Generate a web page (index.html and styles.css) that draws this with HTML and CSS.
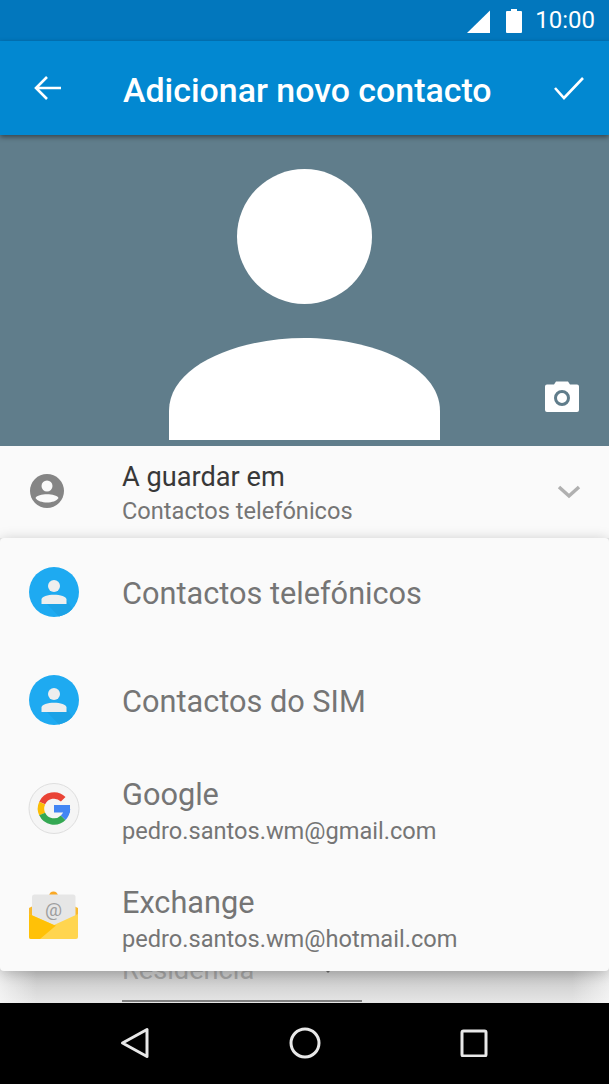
FILE: index.html
```html
<!DOCTYPE html>
<html lang="pt">
<head>
    <meta charset="UTF-8">
    <meta name="viewport" content="width=device-width, initial-scale=1.0">
    <title>Adicionar novo contacto</title>
    <link rel="stylesheet" href="styles.css">
</head>
<body>
    <div class="phone">
        <div class="status-bar">
            <svg class="signal" width="25" height="25" viewBox="0 0 25 25"><path d="M1 24 L24 1.500 V24 Z" fill="#fff"/></svg>
            <svg class="battery" width="16" height="25" viewBox="0 0 16 25"><path d="M5 1 H11 V3 H15 Q16 3 16 4 V24 Q16 25 15 25 H1 Q0 25 0 24 V4 Q0 3 1 3 H5 Z" fill="#fff"/></svg>
            <span class="clock">10:00</span>
        </div>

        <div class="app-bar">
            <svg class="icon-back" width="30" height="30" viewBox="0 0 30 30"><path d="M29 15 H4 M15 4 L4 15 L15 26" fill="none" stroke="#fff" stroke-width="2.600"/></svg>
            <h1>Adicionar novo contacto</h1>
            <svg class="icon-done" width="32" height="26" viewBox="0 0 32 26"><path d="M2 13 L11 23 L30 3" fill="none" stroke="#fff" stroke-width="2.600"/></svg>
        </div>

        <div class="photo">
            <svg class="avatar" width="271" height="272" viewBox="0 0 271 272">
                <circle cx="135.500" cy="68.500" r="67.500" fill="#fff"/>
                <path d="M0 272 V243 C0 197 70 170 135.500 170 C201 170 271 197 271 243 V272 Z" fill="#fff"/>
            </svg>
            <svg class="camera" width="36" height="32" viewBox="0 0 36 32">
                <path d="M3 3.500 H10 L12 .5 H24 L26 3.500 H33 Q35 3.500 35 5.500 V29 Q35 31 33 31 H3 Q1 31 1 29 V5.500 Q1 3.500 3 3.500 Z" fill="#fff"/>
                <circle cx="18" cy="17" r="6.500" fill="none" stroke="#607d8b" stroke-width="3"/>
            </svg>
        </div>

        <div class="save-row">
            <svg class="save-icon" width="36" height="36" viewBox="0 0 36 36">
                <circle cx="18" cy="18" r="17" fill="#858585"/>
                <circle cx="18" cy="13" r="5.500" fill="#fafafa"/>
                <path d="M6.500 25 C9 20 27 20 29.500 25 C26 31 10 31 6.500 25 Z" fill="#fafafa"/>
            </svg>
            <div class="save-text">
                <div class="save-title">A guardar em</div>
                <div class="save-sub">Contactos telefónicos</div>
            </div>
            <svg class="chevron" width="24" height="14" viewBox="0 0 24 14"><path d="M2 2 L12 11 L22 2" fill="none" stroke="#b0b0b0" stroke-width="3.500"/></svg>
        </div>

        <div class="form-rest">
            <div class="type-field">
                <span class="type-label">Residência</span>
                <span class="type-arrow"></span>
            </div>
        </div>

        <div class="nav-bar">
            <svg width="30" height="32" viewBox="0 0 30 32"><path d="M27 2.500 V29.500 L2.500 16 Z" fill="none" stroke="#e8e8e8" stroke-width="3" stroke-linejoin="round"/></svg>
            <svg width="32" height="32" viewBox="0 0 32 32"><circle cx="16" cy="16" r="14" fill="none" stroke="#e8e8e8" stroke-width="3"/></svg>
            <svg width="28" height="28" viewBox="0 0 28 28"><rect x="2" y="2" width="24" height="25" rx="1.500" fill="none" stroke="#e8e8e8" stroke-width="3"/></svg>
        </div>

        <!-- account picker, lies over the form -->
        <div class="picker">
            <div class="picker-item">
                <svg class="picker-icon" width="52" height="52" viewBox="0 0 52 52">
                    <circle cx="26" cy="26" r="25" fill="#1eaaf1"/>
                    <path d="M38.500 34 L44.500 42.800 A25 25 0 0 1 31 50.500 L19 38 H38.500 Z" fill="#1ca2e6"/>
                    <circle cx="26" cy="20" r="6" fill="#eeeeee"/>
                    <path d="M13.500 38 V33.500 C13.500 27 38.500 27 38.500 33.500 V38 Z" fill="#eeeeee"/>
                </svg>
                <div class="picker-name">Contactos telefónicos</div>
            </div>
            <div class="picker-item">
                <svg class="picker-icon" width="52" height="52" viewBox="0 0 52 52">
                    <circle cx="26" cy="26" r="25" fill="#1eaaf1"/>
                    <path d="M38.500 34 L44.500 42.800 A25 25 0 0 1 31 50.500 L19 38 H38.500 Z" fill="#1ca2e6"/>
                    <circle cx="26" cy="20" r="6" fill="#eeeeee"/>
                    <path d="M13.500 38 V33.500 C13.500 27 38.500 27 38.500 33.500 V38 Z" fill="#eeeeee"/>
                </svg>
                <div class="picker-name">Contactos do SIM</div>
            </div>
            <div class="picker-item">
                <svg class="picker-icon" width="52" height="52" viewBox="0 0 52 52">
                    <circle cx="26" cy="25.500" r="25" fill="#f5f5f5" stroke="#dedede"/>
                    <path d="M35.200 16.300 A13 13 0 0 0 14.200 20" fill="none" stroke="#e94335" stroke-width="6.500"/>
                    <path d="M14.200 20 A13 13 0 0 0 14.200 31" fill="none" stroke="#fbbc05" stroke-width="6.500"/>
                    <path d="M14.200 31 A13 13 0 0 0 35.200 34.700" fill="none" stroke="#34a853" stroke-width="6.500"/>
                    <path d="M35.200 34.700 A13 13 0 0 0 39 26" fill="none" stroke="#4285f4" stroke-width="6.500"/>
                    <rect x="26" y="22" width="16" height="7.500" fill="#4285f4"/>
                </svg>
                <div class="picker-text">
                    <div class="picker-name">Google</div>
                    <div class="picker-mail">pedro.santos.wm@gmail.com</div>
                </div>
            </div>
            <div class="picker-item">
                <svg class="picker-icon" width="52" height="52" viewBox="0 0 52 52">
                    <circle cx="25.500" cy="5" r="4.500" fill="#f9a825"/>
                    <path d="M1 17 L25 5 L50 17 V30 H1 Z" fill="#f9b92d"/>
                    <path d="M4 6 Q4 3.500 6.500 3.500 H45 Q47.500 3.500 47.500 6 V26 L26 38 L4 26 Z" fill="#e6e6e6"/>
                    <text class="mail-at" x="25.500" y="25" text-anchor="middle">@</text>
                    <path d="M1 23 L26 34 L50 23 V46 Q50 48 48 48 H3 Q1 48 1 46 Z" fill="#ffd54f"/>
                    <path d="M1 23 L26 34 L28 34.500 L12 48 H3 Q1 48 1 46 Z" fill="#ffc107"/>
                </svg>
                <div class="picker-text">
                    <div class="picker-name">Exchange</div>
                    <div class="picker-mail">pedro.santos.wm@hotmail.com</div>
                </div>
            </div>
        </div>
    </div>
</body>
</html>
```

FILE: styles.css
```css
* { margin: 0; padding: 0; box-sizing: border-box; }
body { background: #000; font-family: Roboto, "Liberation Sans", sans-serif; overflow: hidden; }
svg { display: block; flex-shrink: 0; }

.phone { position: relative; width: 609px; height: 1084px; display: flex; flex-direction: column; overflow: hidden; }

.status-bar { height: 41px; background: #0277bd; color: #fff; display: flex; align-items: center; justify-content: flex-end; padding: 0 14px 0 0; }
.signal { margin-right: 15px; margin-top: 1px; }
.battery { margin-right: 13px; }
.clock { font-size: 24px; line-height: 41px; }

.app-bar { height: 94px; background: #0288d1; color: #fff; display: flex; align-items: center; padding: 0 24px 0 32px; position: relative; z-index: 1; box-shadow: 0 2px 5px rgba(0, 0, 0, 0.45); }
.app-bar h1 { flex: 1; font-size: 33.900px; font-weight: 500; line-height: 40px; padding: 6px 0 0 61px; white-space: nowrap; }

.photo { height: 311px; background: #607d8b; position: relative; display: flex; justify-content: center; align-items: flex-end; padding-bottom: 6px; }
.camera { position: absolute; right: 29px; bottom: 33px; }

.save-row { height: 92px; background: #fafafa; display: flex; align-items: flex-start; padding: 0 28px 0 29px; }
.save-icon { margin-top: 27px; }
.save-text { flex: 1; padding: 15px 0 0 57px; }
.save-title { font-size: 27.200px; line-height: 33px; color: #383838; }
.save-sub { font-size: 23.600px; line-height: 34px; color: #757575; }
.chevron { margin-top: 39px; }

/* the shadow of the picker fades out towards the screen edges */
.form-rest { flex: 1; background: linear-gradient(90deg, rgba(250, 250, 250, 0.7), transparent 6%, transparent 94%, rgba(250, 250, 250, 0.7)), linear-gradient(#c4c4c4 93%, #e6e6e6); padding: 0 0 1px 122px; display: flex; align-items: flex-end; }
.type-field { width: 240px; height: 60px; border-bottom: 2px solid #808080; display: flex; justify-content: space-between; align-items: flex-end; padding: 0 29px 14px 0; }
.type-label { font-size: 27.200px; line-height: 32px; color: #a0a0a0; }
.type-arrow { width: 0; height: 0; border: 5px solid transparent; border-top-color: #666; border-bottom: 0; margin-bottom: 13px; }

.nav-bar { height: 81px; background: #000; display: flex; align-items: center; justify-content: space-between; padding: 0 121px 2px 120px; }

.picker { position: absolute; left: 0; right: 0; top: 538px; height: 433px; background: #fafafa; border-radius: 4px; box-shadow: 0 2px 14px rgba(0, 0, 0, 0.22); display: flex; flex-direction: column; }
.picker-item { height: 108.500px; display: flex; align-items: center; padding: 0 0 0 28px; gap: 42px; }
.picker-name { font-size: 30.700px; line-height: 38px; color: #757575; padding-top: 4px; }
.picker-text { padding-top: 6px; }
.picker-text .picker-name { padding-top: 0; }
.picker-mail { font-size: 23.600px; line-height: 33px; color: #757575; padding-top: 1px; }
.mail-at { font-family: Roboto, sans-serif; font-size: 19px; fill: #9e9e9e; }
```
